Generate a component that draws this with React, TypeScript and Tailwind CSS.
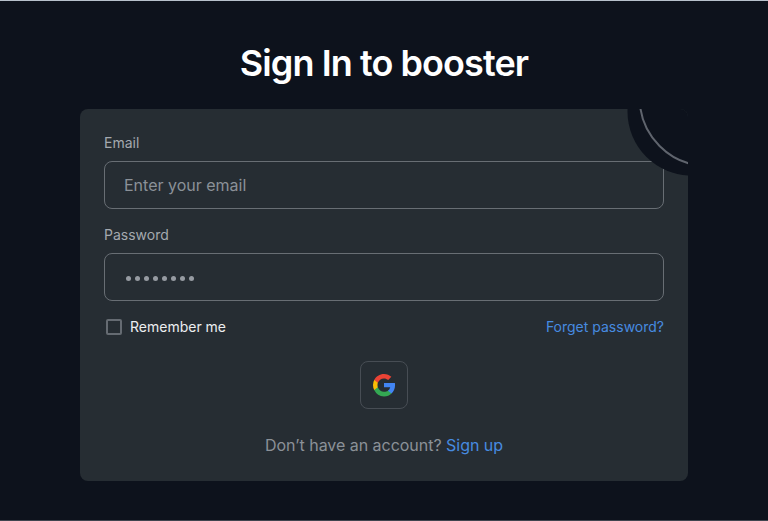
import { useState } from 'react';

function GoogleLogo() {
  return (
    <svg className="size-6" viewBox="0 0 24 24" aria-hidden="true">
      <path fill="#4285F4" d="M23.06 12.25c0-.78-.07-1.53-.2-2.25H12v4.26h6.2a5.3 5.3 0 0 1-2.3 3.48v2.77h3.57c2.08-1.92 3.59-4.74 3.59-8.26z" />
      <path fill="#34A853" d="M12 23.5c3.1 0 5.7-1.02 7.47-2.99l-3.57-2.77c-.98.66-2.23 1.06-3.9 1.06-2.86 0-5.29-1.93-6.16-4.53H2.18v2.84A11.5 11.5 0 0 0 12 23.5z" />
      <path fill="#FBBC05" d="M5.84 14.27A6.6 6.6 0 0 1 5.49 12c0-.79.13-1.55.35-2.27V6.9H2.18A11.3 11.3 0 0 0 1 12c0 1.85.43 3.6 1.18 5.11z" />
      <path fill="#EA4335" d="M12 5.38c1.62 0 3.06.56 4.21 1.64l3.15-3.15C17.45 2.09 14.97 1 12 1 7.7 1 3.99 3.47 2.18 6.9l3.66 2.84C6.71 7.31 9.14 5.38 12 5.38z" />
    </svg>
  );
}

function CornerArc() {
  return (
    <svg className="pointer-events-none absolute right-0 top-0" width="64" height="68" viewBox="0 0 64 68" aria-hidden="true">
      <circle cx="67.5" cy="2.5" r="64" fill="#0d121c" />
      <circle cx="83.5" cy="-11" r="67.8" fill="none" stroke="#5f646d" strokeWidth="2" />
    </svg>
  );
}

const inputClass =
  'h-12 w-full rounded-lg border border-[#686e74] bg-transparent px-[19px] text-[16px] text-[#969ba2] outline-none placeholder:text-[#8b9198]';

export default function App() {
  const [email, setEmail] = useState('');

  return (
    <main className="flex h-[521px] w-[768px] flex-col items-center border-b border-t border-b-[#40454f] border-t-[#b7c0cb] bg-[#0d121c] pt-[37px] font-['Inter','Liberation_Sans',sans-serif]">
      <h1 className="h-[71px] whitespace-nowrap text-[36px] font-semibold leading-[50px] tracking-[-0.92px] text-white">
        Sign In to booster
      </h1>
      <form className="relative flex h-[372px] w-[608px] flex-col overflow-hidden rounded-lg bg-[#262d33] px-6 pt-6">
        <label className="h-7 text-[14px] leading-5 text-[#a4a9af]" htmlFor="email">Email</label>
        <input id="email" className={inputClass} placeholder="Enter your email" value={email} onChange={(e) => setEmail(e.target.value)} />
        <label className="mt-4 h-7 text-[14px] leading-5 text-[#a4a9af]" htmlFor="password">Password</label>
        <div id="password" className="flex h-12 items-center gap-1 rounded-lg border border-[#686e74] px-[21px] pt-0.5">
          {Array.from({ length: 8 }, (_, i) => (
            <span key={i} className="size-[5px] rounded-full bg-[#969ba2]" />
          ))}
        </div>
        <div className="mt-4 flex items-center justify-between text-[14px] leading-5">
          <div className="flex items-center text-[#eceef0]">
            <span className="ml-[2px] mr-2 size-4 rounded-[2px] border-2 border-[#656b72]" />
            Remember me
          </div>
          <a className="text-[#478be0]">Forget password?</a>
        </div>
        <button type="button" aria-label="Google" className="mt-6 flex size-12 items-center justify-center self-center rounded-lg border border-[#474d54]">
          <GoogleLogo />
        </button>
        <p className="mt-6 text-center text-[16px] leading-6 tracking-[-0.03px] text-[#8b9198]">
          Don’t have an account? <a className="text-[#478be0]">Sign up</a>
        </p>
        <CornerArc />
      </form>
    </main>
  );
}
